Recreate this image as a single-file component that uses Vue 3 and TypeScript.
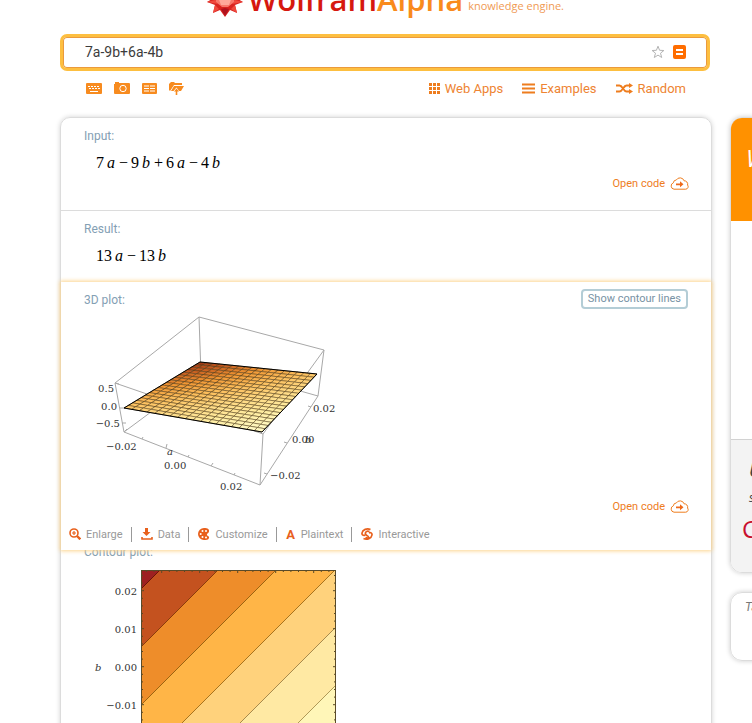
<script setup lang="ts">
import { ref } from 'vue'

interface Cell {
  points: string
  fill: string
}
interface Point {
  x: number
  y: number
}

const query = ref('7a-9b+6a-4b')

/* Surface mesh of the 3D plot */
const corners: Record<'left' | 'back' | 'right' | 'front', Point> = {
  left: { x: 44, y: 103 },
  back: { x: 120, y: 57 },
  right: { x: 237, y: 69 },
  front: { x: 182, y: 127 },
}
const palette: number[][] = [
  [128, 34, 14],
  [196, 88, 30],
  [240, 150, 52],
  [252, 190, 92],
  [254, 216, 130],
  [255, 236, 160],
  [255, 248, 192],
]

function shade(t: number): string {
  const p = Math.min(Math.max(t, 0), 0.999) * (palette.length - 1)
  const i = Math.floor(p)
  const f = p - i
  const c = palette[i].map((v, k) => Math.round(v + (palette[i + 1][k] - v) * f))
  return `rgb(${c.join(',')})`
}

function project(u: number, v: number): Point {
  const { left, back, right, front } = corners
  return {
    x: back.x * (1 - u) * (1 - v) + right.x * u * (1 - v) + left.x * (1 - u) * v + front.x * u * v,
    y: back.y * (1 - u) * (1 - v) + right.y * u * (1 - v) + left.y * (1 - u) * v + front.y * u * v,
  }
}

const steps = 18
const cells: Cell[] = []
for (let i = 0; i < steps; i++) {
  for (let j = 0; j < steps; j++) {
    const quad = [
      project(i / steps, j / steps),
      project((i + 1) / steps, j / steps),
      project((i + 1) / steps, (j + 1) / steps),
      project(i / steps, (j + 1) / steps),
    ]
    cells.push({
      points: quad.map((p) => `${p.x.toFixed(2)},${p.y.toFixed(2)}`).join(' '),
      fill: shade((i + j + 3) / (2 * steps)),
    })
  }
}

/* Diagonal bands of the contour plot, from the lightest down to the darkest */
const size = 194
const bands = [
  { at: 310, fill: '#ffe9a3', line: '#b09a58' },
  { at: 252, fill: '#ffd27c', line: '#a88a4c' },
  { at: 194, fill: '#ffb547', line: '#a8741e' },
  { at: 135, fill: '#ee8d2a', line: '#9c6410' },
  { at: 77, fill: '#c4521f', line: '#8a3c0c' },
  { at: 19, fill: '#9e2021', line: '#6a1408' },
]
const ticks = Array.from({ length: 25 }, (_, i) => ({
  at: 5.5 + i * 7.6,
  len: i % 5 === 2 ? 3 : 2,
}))
const levels = [
  { label: '0.02', y: 21 },
  { label: '0.01', y: 59 },
  { label: '0.00', y: 97 },
  { label: '−0.01', y: 135 },
  { label: '−0.02', y: 173 },
]
</script>

<template>
  <div class="page">
    <header class="masthead">
      <svg class="burst" viewBox="0 0 38 38" aria-hidden="true">
        <path fill="#d9231f" d="M19 0l5 8 8-4-1 9 7 2-6 5 5 3-8 3 2 8-7-3-5 7-5-7-7 3 2-8-8-3 5-3-6-5 7-2-1-9 8 4z" />
        <path fill="#f0483c" d="M9 26l-2 8 6-4zM29 26l2 8-6-4zM1 23l8-2 3 4zM37 23l-8-2-3 4z" />
        <path fill="#b0121e" d="M19 29l4 1-4 7-4-7z" />
        <path fill="#f8786c" d="M8 12h22l-2 11-6 5h-6l-6-5z" />
        <path fill="#ffa89a" d="M12 18h14l-3 8h-8z" />
      </svg>
      <span class="brand"><span class="red">Wolfram</span><span class="orange">Alpha</span></span>
      <span class="tagline">knowledge engine.</span>
    </header>

    <div class="columns">
      <main>
        <form class="search" @submit.prevent>
          <input v-model="query" type="text" aria-label="Query" />
          <button type="button" aria-label="Favorite">
            <svg width="14" height="14" viewBox="0 0 14 14">
              <path d="M7 1.2l1.6 4.1 4.3.2-3.4 2.7 1.2 4.3L7 10.1l-3.7 2.4 1.2-4.3L1.1 5.5l4.3-.2z" fill="none" stroke="#b4b4b4" />
            </svg>
          </button>
          <button type="submit" aria-label="Compute">
            <svg width="13" height="14" viewBox="0 0 13 14">
              <rect width="13" height="14" rx="2" fill="#ff6d00" />
              <path d="M3 5h7M3 9h7" stroke="#fff" stroke-width="2" />
            </svg>
          </button>
        </form>

        <div class="tools">
          <div class="inputs">
            <button type="button" aria-label="Keyboard">
              <svg width="16" height="12" viewBox="0 0 16 12">
                <rect y="1" width="16" height="11" rx="1" fill="#f78b1f" />
                <path d="M2 4.500h12M3 6.500h11" stroke="#fff" stroke-dasharray="2 1" />
                <path d="M4 9.500h8" stroke="#fff" />
              </svg>
            </button>
            <button type="button" aria-label="Image">
              <svg width="16" height="12" viewBox="0 0 16 12">
                <path d="M1 2V0h4v1h10a1 1 0 011 1v9a1 1 0 01-1 1H1a1 1 0 01-1-1V2z" fill="#f78b1f" />
                <circle cx="9" cy="6.500" r="3.200" fill="none" stroke="#fff" />
              </svg>
            </button>
            <button type="button" aria-label="Table">
              <svg width="15" height="12" viewBox="0 0 15 12">
                <rect y="1" width="15" height="11" rx="1" fill="#f78b1f" />
                <path d="M2 4h5M8 4h5M2 6.500h5M8 6.500h5M2 9h5M8 9h5" stroke="#fff" />
              </svg>
            </button>
            <button type="button" aria-label="File upload">
              <svg width="15" height="14" viewBox="0 0 15 14">
                <path d="M0 9V3l2-2h3l1 1h7v2H5L1 10z" fill="#f78b1f" />
                <path d="M5 5h10l-3 5h-2L7.500 6.500 4.500 10H2z" fill="#f78b1f" />
                <path d="M7.500 7.500l2.500 3H8.300V14H6.700v-3.500H5z" fill="#f78b1f" />
              </svg>
            </button>
          </div>
          <nav>
            <a href="#">
              <svg width="11" height="11" viewBox="0 0 11 11">
                <path d="M0 1.500h11M0 5.500h11M0 9.500h11" stroke="#ee7d1e" stroke-width="3" stroke-dasharray="3 1" />
              </svg>
              Web Apps
            </a>
            <a href="#">
              <svg width="13" height="11" viewBox="0 0 13 11">
                <path d="M0 1.500h13M0 5.500h13M0 9.500h13" stroke="#ee7d1e" stroke-width="2" />
              </svg>
              Examples
            </a>
            <a href="#">
              <svg width="17" height="11" viewBox="0 0 17 11">
                <path d="M0 2.500h3.500c3 0 4 6 7 6H14M0 8.500h3.500c3 0 4-6 7-6H14" fill="none" stroke="#ee7d1e" stroke-width="2" />
                <path d="M13 0l4 2.500L13 5zM13 6l4 2.500-4 2.500z" fill="#ee7d1e" />
              </svg>
              Random
            </a>
          </nav>
        </div>

        <div class="results">
          <section class="pod input-pod">
            <h2>Input:</h2>
            <p class="math">7<i>a</i><b>−</b>9<i>b</i><b>+</b>6<i>a</i><b>−</b>4<i>b</i></p>
            <a class="code" href="#">
              Open code
              <svg width="19" height="13" viewBox="0 0 19 13">
                <path d="M4 12.200a3.300 3.300 0 01-.6-6.400A3 3 0 016.300 3a4.300 4.300 0 017.800.8 3.400 3.400 0 013.500 4.200 2.600 2.600 0 01-1.900 4.200z" fill="none" stroke="#ee7d1e" />
                <path d="M6 6.500h4V4.300l3.500 3-3.500 3V8.200H6z" fill="#ee6a1a" />
              </svg>
            </a>
          </section>

          <section class="pod result-pod">
            <h2>Result:</h2>
            <p class="math">13<i>a</i><b>−</b>13<i>b</i></p>
          </section>

          <section class="pod active">
            <div class="heading">
              <h2>3D plot:</h2>
              <button class="contours" type="button">Show contour lines</button>
            </div>
            <svg class="plot3d" width="260" height="190" viewBox="0 0 260 190" role="img" aria-label="3D plot">
              <g class="box">
                <path d="M35 78L119 12L244 45L238 91L180 180L44 127Z" />
                <path d="M35 78L183 129L180 180M119 12L121 70L44 127M121 58L238 91M183 129L244 45" />
                <path d="M44 127l3-3M86 143l1-4M131 161l2-3M35 78l4 1M40 103l4 0M42 118l4 0M207 138l-3-1M231 102l-3-1M187 169l-3-1M62 134l1-2M108 152l1-2M154 170l1-2" />
              </g>
              <polygon v-for="(c, i) in cells" :key="i" class="cell" :points="c.points" :fill="c.fill" />
              <polygon class="edge" points="44,103 120,57 237,69 182,127" />
              <g class="axis">
                <text x="34" y="87" text-anchor="end">0.5</text>
                <text x="37" y="105" text-anchor="end">0.0</text>
                <text x="40" y="122" text-anchor="end">−0.5</text>
                <text x="26" y="145">−0.02</text>
                <text x="84" y="164">0.00</text>
                <text x="140" y="185">0.02</text>
                <text x="190" y="174">−0.02</text>
                <text x="212" y="138">0.00</text>
                <text x="233" y="107">0.02</text>
                <text class="name" x="87" y="150">a</text>
                <text class="name" x="225" y="138">b</text>
              </g>
            </svg>
            <a class="code" href="#">
              Open code
              <svg width="19" height="13" viewBox="0 0 19 13">
                <path d="M4 12.200a3.300 3.300 0 01-.6-6.400A3 3 0 016.300 3a4.300 4.300 0 017.800.8 3.400 3.400 0 013.500 4.200 2.600 2.600 0 01-1.900 4.200z" fill="none" stroke="#ee7d1e" />
                <path d="M6 6.500h4V4.300l3.500 3-3.500 3V8.200H6z" fill="#ee6a1a" />
              </svg>
            </a>
            <div class="actions">
              <button type="button">
                <svg width="12" height="12" viewBox="0 0 12 12">
                  <circle cx="5" cy="5" r="4" fill="none" stroke="#e8601c" stroke-width="1.600" />
                  <path d="M5 3v4M3 5h4" stroke="#e8601c" stroke-width="1.200" />
                  <path d="M8 8l3.300 3.300" stroke="#e8601c" stroke-width="2.400" />
                </svg>
                Enlarge
              </button>
              <button type="button">
                <svg width="12" height="12" viewBox="0 0 12 12">
                  <path d="M4 0h3v4h2.500l-4 4-4-4H4z" fill="#e8601c" />
                  <path d="M1 9v2h10V9" fill="none" stroke="#e8601c" stroke-width="1.600" />
                </svg>
                Data
              </button>
              <button type="button">
                <svg width="12" height="12" viewBox="0 0 12 12">
                  <path d="M6 0c4 0 5.500 1.500 5 3.500S8.500 5.500 9 7s2.500 1 2 3-3 2-5 2a6 6 0 010-12z" fill="#e8601c" />
                  <circle cx="4.500" cy="3" r="1" fill="#fff" /><circle cx="8" cy="3" r="1" fill="#fff" />
                  <circle cx="2.700" cy="6" r="1" fill="#fff" /><circle cx="4.500" cy="9" r="1" fill="#fff" /><circle cx="8" cy="9.500" r="1" fill="#fff" />
                </svg>
                Customize
              </button>
              <button type="button"><span class="letter">A</span>Plaintext</button>
              <button type="button">
                <svg width="12" height="12" viewBox="0 0 12 12">
                  <path d="M9.500 1.500C6 0 1.500 1.500 1 5c-.2 2 1.500 3 3 2M2.500 10.500C6 12 10.500 10.500 11 7c.2-2-1.500-3-3-2M8.500 3.500C6 2.500 4 4 4.500 6s3 1.500 3 3-2 1-3 .5" fill="none" stroke="#e8601c" stroke-width="1.700" />
                </svg>
                Interactive
              </button>
            </div>
          </section>

          <section class="pod contour-pod">
            <h2>Contour plot:</h2>
            <svg class="contour" width="250" height="196" viewBox="-54 0 250 196" role="img" aria-label="Contour plot">
              <svg :width="size" :height="size">
                <rect :width="size" :height="size" fill="#fff6b8" />
                <path v-for="band in bands" :key="band.at" :d="`M-2 -2H${band.at + 2}L-2 ${band.at + 2}Z`" :fill="band.fill" :stroke="band.line" />
              </svg>
              <g class="frame">
                <rect x=".5" y=".5" width="194" height="194" />
                <path v-for="t in ticks" :key="t.at" :d="`M0 ${t.at}h${t.len}M195 ${t.at}h-${t.len}M${t.at} 0v${t.len}`" />
              </g>
              <g class="axis">
                <text v-for="l in levels" :key="l.label" x="-4" :y="l.y + 4" text-anchor="end">{{ l.label }}</text>
                <text class="name" x="-46" y="101">b</text>
              </g>
            </svg>
          </section>
        </div>
      </main>

      <aside>
        <div class="card promo">
          <div class="banner">W</div>
          <div class="blank"></div>
          <div class="offer">
            <span class="script">U</span>
            <span class="script small">s</span>
            <span class="ring">C</span>
          </div>
        </div>
        <div class="card tour">Ta</div>
      </aside>
    </div>
  </div>
</template>

<style>
body {
  background: #fff;
}
</style>

<style scoped>
* {
  box-sizing: border-box;
}
.page {
  height: 100vh;
  overflow: hidden;
  font-family: Roboto, 'Liberation Sans', sans-serif;
  font-size: 12px;
}
button {
  display: flex;
  padding: 0;
  border: 0;
  background: none;
  font: inherit;
}
a {
  text-decoration: none;
}
svg {
  flex: none;
}
.masthead {
  display: flex;
  justify-content: center;
  align-items: flex-start;
  height: 34px;
  padding-left: 18px;
  margin-top: -21px;
  margin-bottom: 21px;
  font-family: 'Open Sans', 'Noto Sans', sans-serif;
  line-height: 40px;
}
.burst {
  width: 38px;
  height: 38px;
  margin-right: 4px;
}
.brand {
  font-size: 31px;
  font-weight: 600;
}
.red {
  color: #d6180f;
}
.orange {
  color: #f98a1c;
}
.tagline {
  margin-left: 5px;
  padding-top: 7px;
  color: #f09a54;
  font-size: 11px;
}
.columns {
  display: grid;
  grid-template-columns: minmax(0, 1fr) 22px;
  gap: 18px;
  padding-left: 60px;
}
.search {
  display: flex;
  align-items: center;
  gap: 8px;
  height: 37px;
  margin-right: 2px;
  padding: 0 21px 1px 20px;
  border: 3px solid #fdbf40;
  border-radius: 7px;
  box-shadow: inset 0 0 0 1px #eb9a3c;
}
.search input {
  flex: 1;
  min-width: 0;
  padding: 0 2px;
  border: 0;
  outline: 0;
  background: none;
  color: #3c3c3c;
  font: 14px Roboto, 'Liberation Sans', sans-serif;
}
.tools {
  display: flex;
  justify-content: space-between;
  align-items: center;
  height: 34px;
  margin-bottom: 12px;
  padding: 0 26px;
}
.inputs {
  display: flex;
  align-items: center;
  gap: 12px;
}
nav {
  display: flex;
  gap: 19px;
}
nav a {
  display: flex;
  align-items: center;
  gap: 5px;
  color: #ee8432;
  font-size: 13px;
}
.results {
  height: 760px;
  border: 1px solid #dcdcdc;
  border-radius: 10px;
  box-shadow: 0 0 5px rgba(0, 0, 0, 0.18);
}
.pod {
  display: flex;
  flex-direction: column;
  padding: 10px 23px 0;
}
h2 {
  margin: 0;
  color: #84a0b4;
  font-size: 12px;
  font-weight: 400;
  line-height: 16px;
}
.math {
  margin: 8px 0 0 12px;
  font-family: 'Liberation Serif', serif;
  font-size: 16px;
  line-height: 22px;
}
.math i {
  margin-left: 3px;
}
.math b {
  margin: 0 3px 0 4px;
  font-weight: 400;
}
.input-pod {
  height: 93px;
  border-bottom: 1px solid #dcdcdc;
}
.result-pod {
  height: 71px;
}
.code {
  display: flex;
  align-items: center;
  align-self: flex-end;
  gap: 5px;
  height: 16px;
  margin-top: 1px;
  margin-right: -1px;
  color: #ee7d1e;
  font-size: 11px;
}
.active {
  position: relative;
  z-index: 1;
  height: 268px;
  margin-bottom: -16px;
  background: #fff;
  box-shadow: 0 0 4px 1px #fcd48c;
}
.heading {
  display: flex;
  justify-content: space-between;
  align-items: flex-start;
}
.contours {
  height: 20px;
  padding: 0 5px;
  margin-top: -3px;
  border: 2px solid #b4cdd6;
  border-radius: 4px;
  color: #7792a4;
  font-size: 11px;
  line-height: 16px;
}
.plot3d {
  margin: -4px 0 0 -4px;
}
.active .code {
  margin-top: 3px;
}
.box {
  fill: none;
  stroke: #a8a8a8;
}
.cell {
  stroke: #4a3410;
  stroke-width: 0.5px;
}
.edge {
  fill: none;
  stroke: #000;
}
.axis {
  fill: #333;
  font-family: 'DejaVu Serif', 'Liberation Serif', serif;
  font-size: 10px;
}
.name {
  font-style: italic;
}
.actions {
  display: flex;
  align-items: center;
  height: 16px;
  margin: 12px -15px 0;
}
.actions button {
  align-items: center;
  gap: 5px;
  padding-right: 8px;
  color: #999;
  font-size: 11px;
  line-height: 15px;
}
.actions button + button {
  padding-left: 9px;
  border-left: 1px solid #999;
}
.letter {
  width: 10px;
  color: #e8601c;
  font-weight: 700;
  font-size: 13px;
}
.contour {
  margin: 10px 0 0 3px;
}
.frame {
  fill: none;
  stroke: #5a4a28;
}
aside {
  width: 260px;
  padding-top: 83px;
}
.card {
  overflow: hidden;
  border: 1px solid #dcdcdc;
  border-radius: 12px;
  box-shadow: 0 0 5px rgba(0, 0, 0, 0.2);
}
.banner {
  height: 103px;
  padding: 22px 15px;
  background: #ff9100;
  color: #fff;
  font: italic 24px/36px 'Open Sans', sans-serif;
}
.blank {
  height: 218px;
}
.offer {
  display: flex;
  flex-direction: column;
  height: 133px;
  padding: 16px 18px;
  border-top: 1px solid #d2d2d2;
  background: #f3f3f3;
}
.script {
  color: #444;
  font: italic 700 20px/28px 'Open Sans', sans-serif;
}
.small {
  font-size: 12px;
  font-weight: 400;
}
.ring {
  margin-left: -7px;
  color: #c8102e;
  font: 24px/34px 'Open Sans', sans-serif;
}
.tour {
  height: 69px;
  margin-top: 19px;
  padding: 6px 14px;
  color: #777;
  font-style: italic;
  line-height: 16px;
}
</style>
